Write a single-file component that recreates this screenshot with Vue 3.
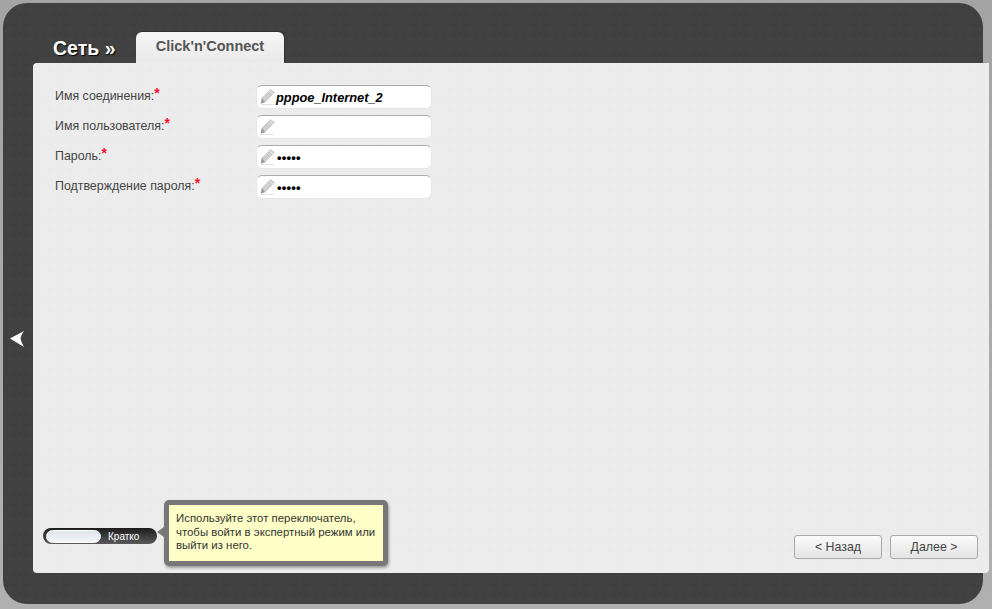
<script setup>
const fields = [
  { label: 'Имя соединения:', value: 'pppoe_Internet_2', kind: 'text' },
  { label: 'Имя пользователя:', value: '', kind: 'text' },
  { label: 'Пароль:', value: '•••••', kind: 'secret' },
  { label: 'Подтверждение пароля:', value: '•••••', kind: 'secret' },
]
</script>

<template>
  <div class="page">
    <div class="panel">
      <svg class="back" width="16" height="18" viewBox="0 0 16 18"><path d="M0 8.5 L14 1 Q11 5 10.5 8.5 Q11 12 14 17 Z" fill="#fff" /></svg>
      <header class="head">
        <h1 class="title">Сеть »</h1>
        <div class="tab">Click'n'Connect</div>
      </header>
      <main class="content">
        <form class="form" @submit.prevent>
          <div v-for="f in fields" :key="f.label" class="row">
            <label class="label">{{ f.label }}<span class="star">*</span></label>
            <div class="input">
              <svg class="pencil" width="15" height="17" viewBox="0 0 15 17">
                <path d="M10.5 .5 L14.5 3.5 L5 13 L1 14.5 L2 9 Z" fill="#cfcfcf" stroke="#bdbdbd" stroke-width=".6" />
                <path d="M9.5 2 L13 5" stroke="#ececec" stroke-width="1" />
                <path d="M2 9 L5 13 L1 14.5 Z" fill="#9a9a9a" />
                <path d="M1 15.5 H14" stroke="#e2e2e2" stroke-width="1" />
              </svg>
              <span :class="f.kind === 'secret' ? 'secret' : 'value'">{{ f.value }}</span>
            </div>
          </div>
        </form>
        <footer class="foot">
          <div class="mode">
            <div class="toggle">
              <span class="knob"></span>
              <span class="toggle-text">Кратко</span>
            </div>
            <div class="tip">Используйте этот переключатель, чтобы войти в экспертный режим или выйти из него.</div>
          </div>
          <div class="buttons">
            <button class="btn" type="button">&lt; Назад</button>
            <button class="btn" type="button">Далее &gt;</button>
          </div>
        </footer>
      </main>
    </div>
  </div>
</template>

<style>
html, body { margin: 0; background: #a8a8a8; overflow: hidden; }
</style>

<style scoped>
.page {
  width: 992px;
  height: 609px;
  padding: 3px 0 0 3px;
  box-sizing: border-box;
  font-family: "Liberation Sans", Arial, sans-serif;
  background: linear-gradient(#a4a4a4, #b0b0b0);
}
.panel {
  position: relative;
  width: 980px;
  height: 601px;
  border-radius: 24px;
  background-color: #414141;
  background-image:
    radial-gradient(circle at 2px 2px, rgba(0,0,0,.05) 1px, transparent 1.5px),
    radial-gradient(circle at 7px 6px, rgba(255,255,255,.02) 1px, transparent 1.5px);
  background-size: 10px 10px;
  padding: 29px 0 0 30px;
  box-sizing: border-box;
}
.back { position: absolute; left: 7px; top: 327px; }
.head {
  display: flex;
  align-items: flex-end;
  height: 31px;
  padding-left: 20px;
}
.title {
  margin: 0 20px 4px 0;
  width: 63px;
  font-size: 19.5px;
  line-height: 22px;
  font-weight: bold;
  color: #fff;
  text-shadow: 1px 1px 1px #000;
  white-space: nowrap;
}
.tab {
  width: 148px;
  height: 31px;
  box-sizing: border-box;
  border-radius: 6px 6px 0 0;
  background: linear-gradient(#f6f6f6, #e9e9e9);
  box-shadow: 1px -1px 1px rgba(0,0,0,.25);
  text-align: center;
  font-size: 14.5px;
  line-height: 28px;
  font-weight: bold;
  color: #555;
}
.content {
  width: 956px;
  height: 510px;
  display: flex;
  flex-direction: column;
  box-sizing: border-box;
  border-radius: 4px 0 4px 4px;
  background-color: #ececec;
  background-image:
    radial-gradient(circle at 2px 2px, rgba(255,255,255,.18) 1px, transparent 1.5px),
    radial-gradient(circle at 7px 7px, rgba(0,0,0,.008) 1px, transparent 1.5px);
  background-size: 10px 10px;
}
.form {
  padding: 22px 0 0 22px;
  display: flex;
  flex-direction: column;
  gap: 6px;
}
.row {
  display: flex;
  height: 24px;
}
.label {
  width: 201px;
  font-size: 12.4px;
  line-height: 22px;
  color: #444;
  white-space: nowrap;
}
.star {
  color: #f5102c;
  font-size: 14px;
  font-weight: bold;
  line-height: 12px;
  vertical-align: 2px;
}
.input {
  width: 176px;
  height: 24px;
  box-sizing: border-box;
  display: flex;
  align-items: center;
  border-radius: 6px;
  background: #fff;
  border: 1px solid #e6e6e6;
  border-top: 1px solid #ababab;
  padding-left: 3px;
}
.pencil { flex: none; margin-right: 1px; }
.value {
  font-size: 12.8px;
  font-weight: bold;
  font-style: italic;
  color: #000;
  white-space: nowrap;
}
.secret {
  margin-left: 1px;
  font-size: 13px;
  font-weight: bold;
  letter-spacing: .2px;
  color: #000;
  white-space: nowrap;
}
.foot {
  margin-top: auto;
  display: flex;
  justify-content: space-between;
  align-items: flex-end;
  padding: 0 11px 7px 10px;
}
.mode {
  display: flex;
  align-items: center;
  gap: 7px;
}
.toggle {
  width: 114px;
  height: 16px;
  margin-top: 6px;
  box-sizing: border-box;
  display: flex;
  align-items: center;
  border-radius: 8px;
  padding: 1px 3px;
  background: linear-gradient(#1c1c1c, #5a5a5a);
}
.knob {
  width: 55px;
  height: 13px;
  box-sizing: border-box;
  flex: none;
  border-radius: 7px;
  background: linear-gradient(#dfe6ea, #f1f5f7);
  border: 1px solid #fff;
}
.toggle-text {
  margin-left: 7px;
  font-size: 10px;
  color: #fff;
}
.tip {
  position: relative;
  width: 224px;
  height: 66px;
  box-sizing: border-box;
  border: 5px solid #777;
  border-radius: 5px;
  background: #ffffc8;
  padding: 7px 0 0 7px;
  font-size: 11.4px;
  line-height: 13.5px;
  color: #333;
  box-shadow: 1px 2px 3px rgba(0,0,0,.35);
}
.tip::before {
  content: "";
  position: absolute;
  left: -12px;
  top: 22px;
  border: 5px solid transparent;
  border-left-width: 0;
  border-right: 7px solid #777;
}
.buttons {
  display: flex;
  gap: 8px;
  margin-bottom: 7px;
}
.btn {
  width: 88px;
  height: 24px;
  padding: 0;
  border: 1px solid #a9a9a9;
  border-radius: 3px;
  background: linear-gradient(#fafafa, #e4e4e4);
  font: 12.4px "Liberation Sans", Arial, sans-serif;
  color: #444;
}
</style>
